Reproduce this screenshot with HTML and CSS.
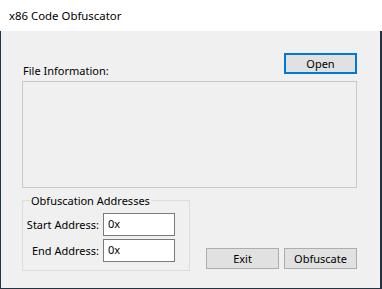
FILE: index.html
```html
<!DOCTYPE html>
<html>
<head>
<meta charset="utf-8">
<link rel="stylesheet" href="styles.css">
</head>
<body>
<div class="window">
  <div class="titlebar">x86 Code Obfuscator</div>
  <div class="client">
    <div class="top-row">
      <span class="label file-label">File Information:</span>
      <button class="btn btn-default">Open</button>
    </div>
    <div class="info-box"></div>
    <div class="bottom-row">
      <fieldset class="group">
        <legend class="legend">Obfuscation Addresses</legend>
        <div class="addr-grid">
          <label class="label addr-label">Start Address:</label>
          <div class="textbox">0x</div>
          <label class="label addr-label">End Address:</label>
          <div class="textbox">0x</div>
        </div>
      </fieldset>
      <div class="actions">
        <button class="btn">Exit</button>
        <button class="btn">Obfuscate</button>
      </div>
    </div>
  </div>
</div>
</body>
</html>
```

FILE: styles.css
```css
html, body {
  margin: 0;
  padding: 0;
}
body {
  font-family: "Noto Sans", "Open Sans", sans-serif;
  font-size: 11px;
  color: #000;
  background: #fff;
}
.window {
  width: 382px;
  height: 289px;
  display: flex;
  flex-direction: column;
}
.titlebar {
  height: 31px;
  line-height: 31px;
  padding-left: 9px;
  background: #fff;
  flex: none;
  font-size: 11.4px;
}
.client {
  flex: 1;
  background: #f0f0f0;
  border-left: 1px solid #1f3345;
  border-right: 2px solid #1f3345;
  border-bottom: 1px solid #1f3345;
  padding: 22px 23px 0 21px;
  display: flex;
  flex-direction: column;
}
.top-row {
  display: flex;
  justify-content: space-between;
  align-items: flex-start;
}
.label {
  line-height: 15px;
  white-space: nowrap;
}
.file-label {
  margin-top: 10px;
  margin-left: 1px;
}
.btn {
  font: inherit;
  color: #000;
  width: 73px;
  height: 21px;
  padding: 0;
  margin: 0;
  background: #e1e1e1;
  border: 1px solid #adadad;
  border-radius: 0;
  line-height: 17px;
}
.btn-default {
  border: 2px solid #0078d7;
  line-height: 15px;
}
.info-box {
  margin-top: 3px;
  height: 107px;
  box-sizing: border-box;
  border: 1px solid #c9c9c9;
  background: #f0f0f0;
}
.bottom-row {
  margin-top: 5px;
  display: flex;
  justify-content: space-between;
  align-items: flex-end;
}
.group {
  margin: 0;
  padding: 5px 14px 8px 7px;
  border: 1px solid #dcdcdc;
  min-inline-size: 0;
}
.legend {
  padding: 0 1px;
  margin-left: 0;
  line-height: 15px;
}
.addr-grid {
  display: grid;
  grid-template-columns: 70px 72px;
  column-gap: 3px;
  row-gap: 3px;
  align-items: center;
}
.addr-label {
  justify-self: end;
  margin-right: 1px;
}
.textbox {
  height: 23px;
  box-sizing: border-box;
  border: 1px solid #7a7a7a;
  background: #fff;
  padding-left: 4px;
  line-height: 19px;
}
.actions {
  display: flex;
  gap: 5px;
  margin-bottom: 2px;
}
```
